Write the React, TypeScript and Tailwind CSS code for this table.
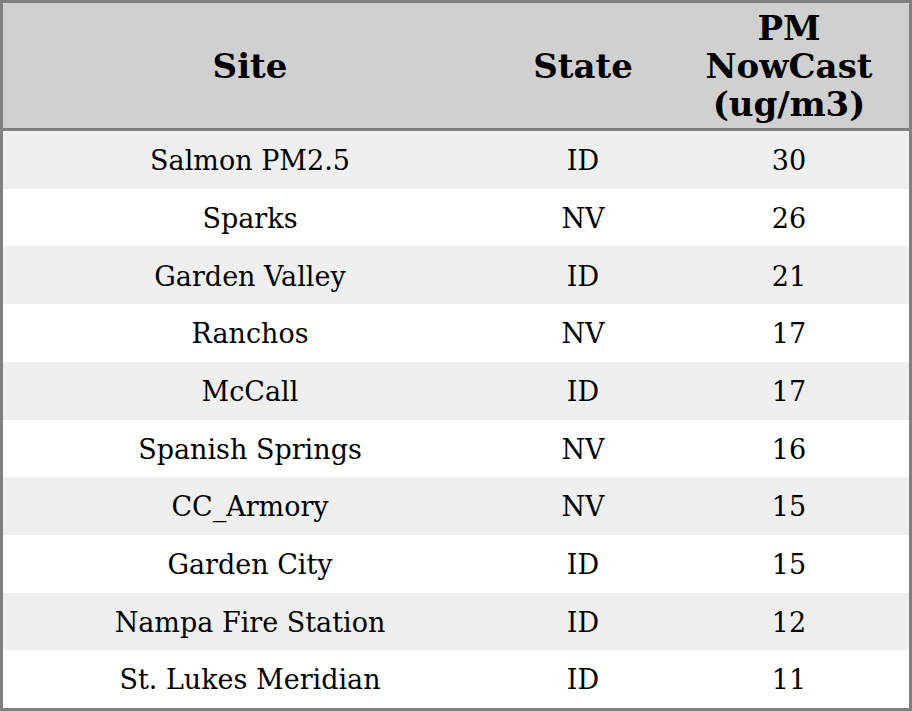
const rows: [string, string, number][] = [
  ['Salmon PM2.5', 'ID', 30],
  ['Sparks', 'NV', 26],
  ['Garden Valley', 'ID', 21],
  ['Ranchos', 'NV', 17],
  ['McCall', 'ID', 17],
  ['Spanish Springs', 'NV', 16],
  ['CC_Armory', 'NV', 15],
  ['Garden City', 'ID', 15],
  ['Nampa Fire Station', 'ID', 12],
  ['St. Lukes Meridian', 'ID', 11],
];

export default function App() {
  return (
    <div className="w-[912px] h-[711px] border-[3px] border-[#808080] bg-white text-black font-['DejaVu_Serif',serif] flex flex-col">
      <div className="grid grid-cols-[494px_172px_1fr] h-[125px] bg-[#d0d0d0] font-bold text-[34px] leading-[38px] text-center items-center">
        <div>Site</div>
        <div>State</div>
        <div>
          PM
          <br />
          NowCast
          <br />
          (ug/m3)
        </div>
      </div>
      <div className="h-[3px] bg-[#808080]" />
      <div className="flex-1 flex flex-col">
        {rows.map(([site, state, value], i) => (
          <div
            key={site}
            className={`flex-1 grid grid-cols-[494px_172px_1fr] items-center text-center text-[27px] pt-[3px] ${i % 2 === 0 ? 'bg-[#efefef]' : 'bg-white'}`}
          >
            <div>{site}</div>
            <div>{state}</div>
            <div>{value}</div>
          </div>
        ))}
      </div>
    </div>
  );
}
